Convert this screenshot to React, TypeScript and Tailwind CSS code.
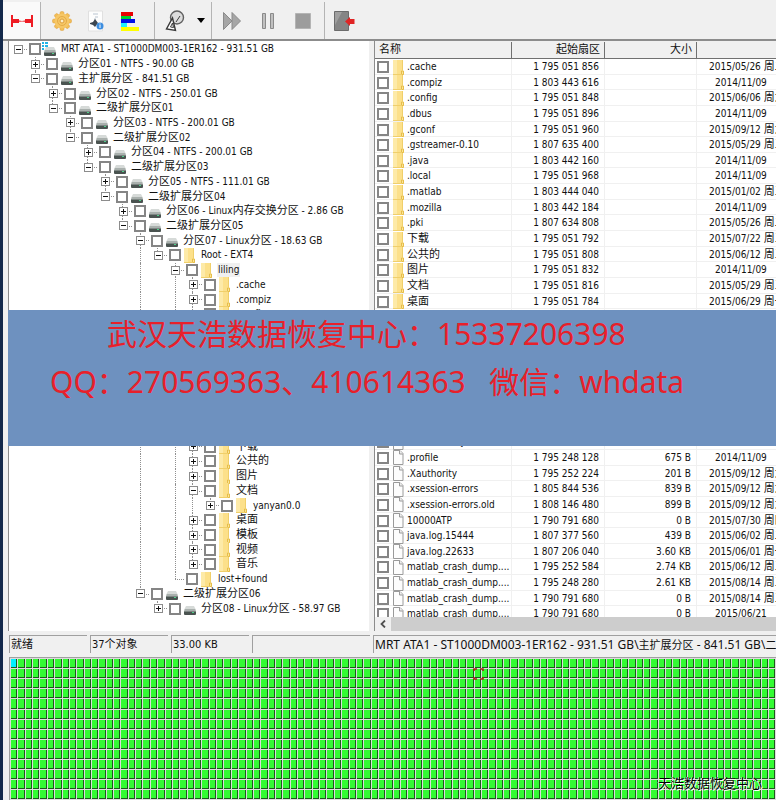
import { Fragment, type ReactNode } from "react";
import clsx from "clsx";

type IconKind = "disk" | "drive" | "folder" | "file";

interface TreeNode {
  level: number;
  label: string;
  icon: IconKind;
  state: "open" | "closed" | "leaf";
  selected?: boolean;
}

interface FileRow {
  name: string;
  sector: string;
  size?: string;
  date: string;
}

const open = (level: number, label: string, icon: IconKind = "drive"): TreeNode => ({
  level,
  label,
  icon,
  state: "open",
});
const closed = (level: number, label: string, icon: IconKind = "drive"): TreeNode => ({
  level,
  label,
  icon,
  state: "closed",
});

const homeFolders = [
  ".cache",
  ".compiz",
  ".config",
  ".dbus",
  ".gconf",
  ".gstreamer-0.10",
  ".java",
  ".local",
  ".matlab",
  ".mozilla",
  ".pki",
  "下载",
  "公共的",
  "图片",
];

const tree: TreeNode[] = [
  open(0, "MRT ATA1 - ST1000DM003-1ER162 - 931.51 GB", "disk"),
  closed(1, "分区01 - NTFS - 90.00 GB"),
  open(1, "主扩展分区 - 841.51 GB"),
  closed(2, "分区02 - NTFS - 250.01 GB"),
  open(2, "二级扩展分区01"),
  closed(3, "分区03 - NTFS - 200.01 GB"),
  open(3, "二级扩展分区02"),
  closed(4, "分区04 - NTFS - 200.01 GB"),
  open(4, "二级扩展分区03"),
  closed(5, "分区05 - NTFS - 111.01 GB"),
  open(5, "二级扩展分区04"),
  closed(6, "分区06 - Linux内存交换分区 - 2.86 GB"),
  open(6, "二级扩展分区05"),
  open(7, "分区07 - Linux分区 - 18.63 GB"),
  open(8, "Root - EXT4", "folder"),
  { ...open(9, "liling", "folder"), selected: true },
  ...homeFolders.map((name) => closed(10, name, "folder")),
  open(10, "文档", "folder"),
  closed(11, "yanyan0.0", "folder"),
  closed(10, "桌面", "folder"),
  closed(10, "模板", "folder"),
  closed(10, "视频", "folder"),
  closed(10, "音乐", "folder"),
  { level: 9, label: "lost+found", icon: "folder", state: "leaf" },
  open(7, "二级扩展分区06"),
  closed(8, "分区08 - Linux分区 - 58.97 GB"),
];

const files: FileRow[] = [
  { name: ".cache", sector: "1 795 051 856", date: "2015/05/26 周二" },
  { name: ".compiz", sector: "1 803 443 616", date: "2014/11/09" },
  { name: ".config", sector: "1 795 051 848", date: "2015/06/06 周六" },
  { name: ".dbus", sector: "1 795 051 896", date: "2014/11/09" },
  { name: ".gconf", sector: "1 795 051 960", date: "2015/09/12 周六" },
  { name: ".gstreamer-0.10", sector: "1 807 635 400", date: "2015/05/29 周五" },
  { name: ".java", sector: "1 803 442 160", date: "2014/11/09" },
  { name: ".local", sector: "1 795 051 968", date: "2014/11/09" },
  { name: ".matlab", sector: "1 803 444 040", date: "2015/01/02 周五" },
  { name: ".mozilla", sector: "1 803 442 184", date: "2014/11/09" },
  { name: ".pki", sector: "1 807 634 808", date: "2015/05/26 周二" },
  { name: "下载", sector: "1 795 051 792", date: "2015/07/22 周三" },
  { name: "公共的", sector: "1 795 051 808", date: "2015/06/12 周五" },
  { name: "图片", sector: "1 795 051 832", date: "2014/11/09" },
  { name: "文档", sector: "1 795 051 816", date: "2015/05/29 周五" },
  { name: "桌面", sector: "1 795 051 784", date: "2015/06/29 周一" },
  { name: "模板", sector: "1 795 051 800", date: "2014/11/09" },
  { name: "视频", sector: "1 795 051 840", date: "2014/11/09" },
  { name: "音乐", sector: "1 795 051 824", date: "2014/11/09" },
  { name: ".bash_history", sector: "1 795 252 208", size: "1.20 KB", date: "2015/09/12 周六" },
  { name: ".bash_logout", sector: "1 795 248 112", size: "220 B", date: "2014/11/09" },
  { name: ".bashrc", sector: "1 795 248 120", size: "3.56 KB", date: "2014/11/09" },
  { name: ".dmrc", sector: "1 795 248 136", size: "25 B", date: "2014/11/09" },
  { name: ".gksu.lock", sector: "1 790 791 680", size: "0 B", date: "2014/11/09" },
  { name: ".ICEauthority", sector: "1 795 252 216", size: "334 B", date: "2015/09/12 周六" },
  { name: ".profile", sector: "1 795 248 128", size: "675 B", date: "2014/11/09" },
  { name: ".Xauthority", sector: "1 795 252 224", size: "201 B", date: "2015/09/12 周六" },
  { name: ".xsession-errors", sector: "1 805 844 536", size: "839 B", date: "2015/09/12 周六" },
  { name: ".xsession-errors.old", sector: "1 808 146 480", size: "899 B", date: "2015/09/12 周六" },
  { name: "10000ATP", sector: "1 790 791 680", size: "0 B", date: "2015/07/30 周四" },
  { name: "java.log.15444", sector: "1 807 377 560", size: "439 B", date: "2015/06/02 周二" },
  { name: "java.log.22633", sector: "1 807 206 040", size: "3.60 KB", date: "2015/06/01 周一" },
  { name: "matlab_crash_dump....", sector: "1 795 252 584", size: "2.74 KB", date: "2015/06/12 周五" },
  { name: "matlab_crash_dump....", sector: "1 795 248 280", size: "2.61 KB", date: "2015/08/14 周五" },
  { name: "matlab_crash_dump....", sector: "1 790 791 680", size: "0 B", date: "2015/08/14 周五" },
  { name: "matlab_crash_dump....", sector: "1 790 791 680", size: "0 B", date: "2015/06/21" },
];

/** Sets runs of Chinese one pixel larger than the Latin text round them. */
function Mixed({ text }: { text: string }) {
  return (
    <>
      {text.split(/([\u4e00-\u9fff]+)/).map((part, i) =>
        i % 2 ? (
          <span key={i} className="text-[11px]">
            {part}
          </span>
        ) : (
          <Fragment key={i}>{part}</Fragment>
        ),
      )}
    </>
  );
}

function NodeIcon({ kind }: { kind: IconKind }) {
  if (kind === "folder") {
    return (
      <svg width="15" height="15" viewBox="0 0 15 15" className="shrink-0">
        <path d="M2 0h10v11h1v4H2z" fill="#fce08a" />
        <path d="M2 0h4v15H2z" fill="#fdeaa8" />
        <path d="M10.500 14.500v-3.500h2v3.500z" fill="#fbe596" stroke="#e6bd4a" />
        <path d="M11.500 0v11M2 14.500h9" stroke="#f0cf6a" fill="none" />
      </svg>
    );
  }
  if (kind === "file") {
    return (
      <svg width="15" height="15" viewBox="0 0 15 15" className="shrink-0">
        <path d="M2.500 0.500h6.500l3 3v11h-9.500z" fill="#fdfdfd" stroke="#9a9a9a" />
        <path d="M8.500 0.500v3.500h3.500" fill="#eee" stroke="#9a9a9a" />
      </svg>
    );
  }
  return (
    <svg width="15" height="15" viewBox="0 0 15 15" className="shrink-0">
      <path d="M4 5h8l2 4H2z" fill="#d6dad8" />
      <path d="M3 8h10l1 2H2z" fill="#a9b0ad" />
      <rect x="2" y="10" width="12" height="4" rx="1" fill="#4a5350" />
      <rect x="2" y="10" width="12" height="1" fill="#7d8683" />
      <rect x="10" y="11" width="2" height="1" fill="#4fd08a" />
      {kind === "disk" && (
        <path d="M0 0h2v2H0zM3 0h3v2H3zM0 3h2v2H0zM3 3h3v2H3zM0 6h2v2H0z" fill="#1fb4e8" />
      )}
    </svg>
  );
}

function Check({ label }: { label: string }) {
  return (
    <input
      type="checkbox"
      aria-label={label}
      className="size-3 shrink-0 appearance-none border-2 border-[#858585] bg-white"
    />
  );
}

/** True when another node of `level` follows below in the same branch. */
function continues(index: number, level: number) {
  for (let i = index + 1; i < tree.length; i++) {
    if (tree[i].level < level) return false;
    if (tree[i].level === level) return true;
  }
  return false;
}

function TreeRow({ node, index }: { node: TreeNode; index: number }) {
  const columns = Array.from({ length: node.level + 1 }, (_, i) => i);
  return (
    <li className="flex min-h-0 items-center">
      {columns.map((level) => {
        const own = level === node.level;
        const below = continues(index, level);
        return (
          <span
            key={level}
            className={clsx(
              "relative flex h-full shrink-0 items-center justify-center",
              level % 2 ? "w-[17px]" : "w-[18px]",
            )}
          >
            {own && level > 0 && (
              <span className="absolute top-0 left-2 h-1/2 border-l border-dotted border-[#909090]" />
            )}
            {below && (
              <span
                className={clsx(
                  "absolute bottom-0 left-2 border-l border-dotted border-[#909090]",
                  own ? "h-1/2" : "h-full",
                )}
              />
            )}
            {own && (
              <span className="absolute top-[7px] right-0 left-2 border-t border-dotted border-[#909090]" />
            )}
            {own && node.state !== "leaf" && (
              <button
                type="button"
                aria-label={`${node.state === "open" ? "折叠" : "展开"} ${node.label}`}
                className="relative block size-[9px]"
              >
                <svg width="9" height="9" viewBox="0 0 9 9" className="block">
                  <rect x="0.500" y="0.500" width="8" height="8" fill="#fff" stroke="#8c8c8c" />
                  <path
                    d={node.state === "open" ? "M2 4.500h5" : "M2 4.500h5M4.500 2v5"}
                    stroke="#111"
                  />
                </svg>
              </button>
            )}
          </span>
        );
      })}
      <label className="ml-0.5 flex items-center whitespace-nowrap">
        <Check label={node.label} />
        <span className="ml-px flex">
          <NodeIcon kind={node.icon} />
        </span>
        <span
          className={clsx("ml-[3px] px-px leading-[14px]", node.selected && "bg-[#f0f0f0]")}
        >
          <Mixed text={node.label} />
        </span>
      </label>
    </li>
  );
}

function ToolButton({
  label,
  className,
  children,
}: {
  label: string;
  className: string;
  children: ReactNode;
}) {
  return (
    <button
      type="button"
      aria-label={label}
      className={clsx("flex h-full shrink-0 items-center justify-center", className)}
    >
      {children}
    </button>
  );
}

function Divider() {
  return <span className="h-full w-px shrink-0 bg-[#b4b4b4]" />;
}

function Toolbar() {
  return (
    <header className="flex h-[41px] items-center border-b-2 border-[#8c8c8c] pt-0.5">
      <ToolButton label="连接" className="w-[37px] bg-[#fafafa]">
        <svg width="22" height="12" viewBox="0 0 22 12" fill="#ee1c24">
          <path d="M0 0h2v4h6v1.500l3 0.500 3-0.500V4h6V0h2v12h-2V8h-6V6.800L11 6.500 8 6.800V8H2v4H0z" />
        </svg>
      </ToolButton>
      <Divider />
      <ToolButton label="设置" className="ml-1 w-[34px]">
        <svg width="20" height="20" viewBox="0 0 20 20">
          <g fill="#f2bc55" stroke="#dd9e3a" strokeWidth="0.5">
            {[0, 45, 90, 135].map((angle) => (
              <rect
                key={angle}
                x="8"
                y="0.500"
                width="4"
                height="19"
                rx="1.500"
                transform={`rotate(${angle} 10 10)`}
              />
            ))}
          </g>
          <circle cx="10" cy="10" r="7.500" fill="#f6c766" />
          <circle cx="10" cy="10" r="4.500" fill="none" stroke="#e5ab47" />
          <circle cx="10" cy="10" r="2" fill="#fbeecb" stroke="#dd9e3a" />
        </svg>
      </ToolButton>
      <ToolButton label="报告" className="w-[34px]">
        <svg width="18" height="22" viewBox="0 0 18 22">
          <path d="M1.500 1h14v20h-14z" fill="#fdfdfd" stroke="#e0e0e0" />
          <path d="M6 4h5M8 7h3M7 9h2" stroke="#b9c4d0" />
          <path d="M3 13l3-1 2-3 3 4-3 4-2-2-3-1z" fill="#3c4650" />
          <circle cx="13" cy="16" r="3.500" fill="#3d8ee0" />
          <path d="M13 15v3M13 13.500v1" stroke="#fff" />
        </svg>
      </ToolButton>
      <ToolButton label="图例" className="w-[34px]">
        <svg width="18" height="20" viewBox="0 0 18 20">
          <path d="M0 1h12v4H0z" fill="#e80000" />
          <path d="M0 5h10v3H0z" fill="#00d030" />
          <path d="M0 8h14v4H0z" fill="#0010e8" />
          <path d="M0 12h6v4H0z" fill="#20f0ff" />
          <path d="M0 16h18v4H0z" fill="#ffff00" />
        </svg>
      </ToolButton>
      <span className="w-[7px] shrink-0" />
      <Divider />
      <ToolButton label="查找" className="w-10">
        <svg width="20" height="24" viewBox="0 0 20 24" fill="none" stroke="#3a3a3a">
          <circle cx="12" cy="8.500" r="6.500" fill="#dcdcdc" stroke="#606060" strokeWidth="1.400" />
          <path d="M7.500 9l3 12.500L1.500 20z" fill="#fff" strokeWidth="1.400" />
          <path d="M11 13l4-6M5.500 18l2-4 1 4.500z" />
        </svg>
      </ToolButton>
      <ToolButton label="查找选项" className="w-4 pr-1">
        <svg width="8" height="5" viewBox="0 0 8 5">
          <path d="M0 0h8L4 5z" fill="#000" />
        </svg>
      </ToolButton>
      <Divider />
      <ToolButton label="继续" className="ml-px w-[38px]">
        <svg width="18" height="18" viewBox="0 0 18 18" fill="#a6a6a6" stroke="#8a8a8a">
          <path d="M0.500 0.500L9 9l-8.500 8.500zM9 0.500L17.500 9 9 17.500z" />
        </svg>
      </ToolButton>
      <ToolButton label="暂停" className="w-[34px]">
        <svg width="12" height="16" viewBox="0 0 12 16" fill="#c0c0c0" stroke="#8a8a8a">
          <path d="M0.500 0.500h3v15h-3zM8.500 0.500h3v15h-3z" />
        </svg>
      </ToolButton>
      <ToolButton label="停止" className="w-9">
        <svg width="16" height="16" viewBox="0 0 16 16">
          <path d="M0.500 0.500h15v15h-15z" fill="#9c9c9c" stroke="#b4b4b4" />
        </svg>
      </ToolButton>
      <span className="w-[3px] shrink-0" />
      <Divider />
      <ToolButton label="退出" className="w-10">
        <svg width="22" height="20" viewBox="0 0 22 20">
          <path d="M0.500 0.500h14v19h-14z" fill="#858585" stroke="#6c6c6c" />
          <path d="M1 1h7L1 14z" fill="#a0a0a0" />
          <path d="M11 10.500l5-4.500v2h4.500v5H16v2z" fill="#e02424" />
        </svg>
      </ToolButton>
    </header>
  );
}

const listColumns = "grid grid-cols-[137px_93px_92px_1fr]";

function FileList() {
  return (
    <section className="flex min-w-0 flex-1 flex-col overflow-hidden border-l border-[#8c8c8c] bg-white">
      <div className="h-[576px] overflow-hidden">
        <table className="block">
          <thead className="block">
            <tr
              className={clsx(
                listColumns,
                "h-[18px] border-b border-[#707070] bg-[#f0f0f0] pt-px text-[11px] leading-4",
              )}
            >
              <th className="border-r border-[#707070] pl-1 text-left font-normal">名称</th>
              <th className="border-r border-[#707070] pr-1 text-right font-normal">
                起始扇区
              </th>
              <th className="border-r border-[#707070] pr-1 text-right font-normal">大小</th>
              <th aria-label="日期" />
            </tr>
          </thead>
          <tbody className="grid h-[563px] auto-rows-fr">
            {files.map((file, i) => (
              <tr
                key={i}
                className={clsx(
                  listColumns,
                  "min-h-0 items-center border-b border-[#f0f0f0] leading-4 whitespace-nowrap",
                )}
              >
                <td className="overflow-hidden border-r border-[#f0f0f0]">
                  <label className="flex items-center pl-0.5">
                    <Check label={file.name} />
                    <span className="ml-0.5 flex">
                      <NodeIcon kind={i < 19 ? "folder" : "file"} />
                    </span>
                    <span className="ml-px">
                      <Mixed text={file.name} />
                    </span>
                  </label>
                </td>
                <td className="border-r border-[#f0f0f0] pr-[5px] text-right">
                  {file.sector}
                </td>
                <td className="h-4 border-r border-[#f0f0f0] pr-[5px] text-right">
                  {file.size}
                </td>
                <td
                  className={clsx(
                    "min-w-0 overflow-hidden",
                    file.date.includes("周") ? "pl-3" : "pl-[18px]",
                  )}
                >
                  <Mixed text={file.date} />
                </td>
              </tr>
            ))}
          </tbody>
        </table>
      </div>
      <div className="flex h-[14px] bg-[#cdcdcd]">
        <button
          type="button"
          aria-label="向左滚动"
          className="flex w-4 items-center justify-center bg-[#f0f0f0]"
        >
          <svg width="6" height="8" viewBox="0 0 6 8" fill="none" stroke="#505050">
            <path d="M5 0.500L1.500 4 5 7.500" strokeWidth="1.800" />
          </svg>
        </button>
      </div>
    </section>
  );
}

function StatusCell({ className, children }: { className: string; children?: ReactNode }) {
  return (
    <span
      className={clsx(
        "h-[18px] overflow-hidden border-t border-l border-[#a0a0a0] pl-px leading-[18px] whitespace-nowrap",
        className,
      )}
    >
      {children}
    </span>
  );
}

function StatusBar() {
  return (
    <footer className="flex h-[26px] items-start gap-[3px] pt-1 pl-1.5 text-[11px]">
      <StatusCell className="w-[78px] shrink-0">就绪</StatusCell>
      <StatusCell className="w-[78px] shrink-0">37个对象</StatusCell>
      <StatusCell className="w-[78px] shrink-0">33.00 KB</StatusCell>
      <StatusCell className="w-[118px] shrink-0" />
      <StatusCell className="min-w-0 flex-1 font-['Noto_Sans','Noto_Sans_CJK_SC',sans-serif] text-xs/[18px]">
        MRT ATA1 - ST1000DM003-1ER162 - 931.51 GB\
        <Mixed text="主扩展分区" /> - 841.51 GB\<Mixed text="二级扩展分区" />
        01
      </StatusCell>
    </footer>
  );
}

const MAP_COLS = 104;
const MAP_ROWS = 14;
const CELL_W = 7.36;
const CELL_H = 10.1;

function SectorMap() {
  const cells = Array.from({ length: MAP_COLS * MAP_ROWS }, (_, i) => {
    const col = i % MAP_COLS;
    const row = Math.floor(i / MAP_COLS);
    const x = Math.round(col * CELL_W);
    const y = Math.round(row * CELL_H);
    return {
      x,
      y,
      w: Math.round((col + 1) * CELL_W) - x - 1,
      h: Math.round((row + 1) * CELL_H) - y - 1,
    };
  });
  return (
    <div className="relative ml-1.5 overflow-hidden border-t border-l border-[#a0a0a0] bg-[#dcdcdc] pt-px pl-px">
      <svg width="766" height="141" viewBox="0 0 766 141" className="block" role="img" aria-label="扇区图">
        {cells.map((c, i) => (
          <g key={i}>
            <rect x={c.x} y={c.y} width={c.w} height={c.h} fill="#1c5a1c" />
            <rect
              x={c.x}
              y={c.y}
              width={c.w - 1}
              height={c.h - 1}
              fill={i === 0 ? "#00f0ff" : "#33fb33"}
            />
          </g>
        ))}
        <path
          d="M463 12v-2h3M469 10h3v2M463 18v2h3M469 20h3v-2"
          fill="none"
          stroke="#a02010"
          strokeWidth="1.500"
        />
      </svg>
      <p className="absolute right-3.5 bottom-1.5 text-[13px] leading-5 text-black [text-shadow:1px_1px_0_#fff,-1px_0_0_#dfd]">
        天浩数据恢复中心
      </p>
    </div>
  );
}

function ContactBanner() {
  return (
    <div className="absolute inset-x-0 top-[269px] left-[5px] h-[136px] bg-[#6e91bf] font-['Noto_Sans','Noto_Sans_CJK_SC',sans-serif] text-[30px] leading-[48px] whitespace-pre text-[#e8202a]">
      <p className="pl-[99px]">武汉天浩数据恢复中心：15337206398</p>
      <p className="pl-[42px]">QQ：270569363、410614363   微信：whdata</p>
    </div>
  );
}

export default function App() {
  return (
    <div className="flex min-h-screen overflow-hidden bg-[#f0f0f0] font-['DejaVu_Sans_Condensed','Noto_Sans_CJK_SC',sans-serif] text-[10px] text-[#111]">
      <div className="w-[3px] shrink-0 bg-[#14294b]" />
      <div className="flex min-w-0 flex-1 flex-col">
        <Toolbar />
        <main className="relative flex gap-[5px] pl-[5px]">
          <ul className="min-h-[590px] w-[361px] shrink-0 overflow-hidden border-l border-[#8c8c8c] bg-white pt-px">
            <li>
              <ul className="grid h-[574px] auto-rows-fr">
                {tree.map((node, i) => (
                  <TreeRow key={i} node={node} index={i} />
                ))}
              </ul>
            </li>
          </ul>
          <FileList />
          <ContactBanner />
        </main>
        <StatusBar />
        <SectorMap />
      </div>
    </div>
  );
}
